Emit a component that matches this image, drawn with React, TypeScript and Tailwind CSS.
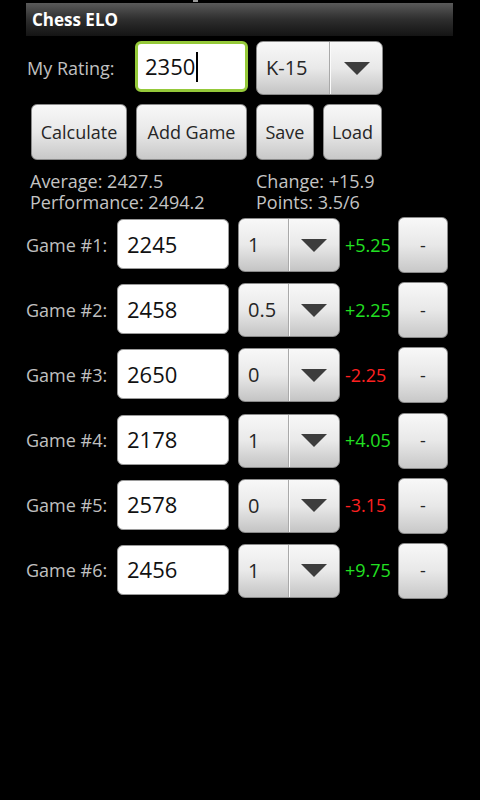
import React from "react";

const games = [
  { n: 1, r: "2245", s: "1", d: "+5.25", pos: true },
  { n: 2, r: "2458", s: "0.5", d: "+2.25", pos: true },
  { n: 3, r: "2650", s: "0", d: "-2.25", pos: false },
  { n: 4, r: "2178", s: "1", d: "+4.05", pos: true },
  { n: 5, r: "2578", s: "0", d: "-3.15", pos: false },
  { n: 6, r: "2456", s: "1", d: "+9.75", pos: true },
];

function Triangle() {
  return (
    <svg width="26" height="13" viewBox="0 0 26 13">
      <polygon points="0,0 26,0 13,13" fill="#3d3d3d" />
    </svg>
  );
}

function Spinner({ value, left, right, h }: { value: string; left: string; right: string; h: string }) {
  return (
    <div
      className={`flex ${h} rounded-[7px] border border-[#8a8a8a] bg-gradient-to-b from-[#f8f8f8] via-[#e9e9e9] to-[#c4c4c4] overflow-hidden`}
    >
      <div className={`${left} flex items-center pl-[9px] text-[20px] text-[#262626]`}>{value}</div>
      <div className="w-px bg-[#a9a9a9]" />
      <div className={`${right} flex items-center justify-center border-l border-[#fbfbfb]`}>
        <Triangle />
      </div>
    </div>
  );
}

function Btn({ label, w }: { label: string; w: string }) {
  return (
    <div
      className={`${w} h-[56px] rounded-[6px] border border-[#8a8a8a] bg-gradient-to-b from-[#f8f8f8] via-[#e8e8e8] to-[#c8c8c8] flex items-center justify-center text-[18px] text-[#262626]`}
    >
      {label}
    </div>
  );
}

export default function App() {
  return (
    <div className="w-[480px] h-[800px] bg-black overflow-hidden [font-family:'Open_Sans','DejaVu_Sans',sans-serif]">
      <div className="h-[3px] flex">
        <div className="ml-[193px] w-[5px] h-[2px] bg-[#9a9a9a]" />
      </div>
      <div className="ml-[26px] w-[427px] h-[33px] bg-gradient-to-b from-[#5a5a5a] via-[#2e2e2e] to-[#141414] flex items-center pl-[6px] text-white font-bold text-[17px] leading-none">
        Chess ELO
      </div>

      <div className="mt-[5px] flex items-center h-[54px]">
        <div className="w-[135px] pl-[27px] text-[18px] text-[#c0c0c0]">My Rating:</div>
        <div className="w-[113px] h-[51px] self-start rounded-[6px] border-[3px] border-[#95c93a] bg-white flex items-center pl-[7px] text-[22px] text-[#111]">
          2350<span className="ml-[1px] inline-block w-[2px] h-[30px] bg-black" />
        </div>
        <div className="ml-[8px] w-[127px]">
          <Spinner value="K-15" left="w-[73px]" right="w-[52px]" h="h-[54px]" />
        </div>
      </div>

      <div className="mt-[9px] flex pl-[31px] gap-[9px]">
        <Btn label="Calculate" w="w-[96px]" />
        <Btn label="Add Game" w="w-[111px]" />
        <Btn label="Save" w="w-[58px]" />
        <Btn label="Load" w="w-[59px]" />
      </div>

      <div className="mt-[11px] flex text-[18px] leading-[21px] text-[#c4c4c4]">
        <div className="w-[256px] pl-[30px]">
          <div>Average: 2427.5</div>
          <div>Performance: 2494.2</div>
        </div>
        <div>
          <div>Change: +15.9</div>
          <div>Points: 3.5/6</div>
        </div>
      </div>

      <div className="mt-[4px] flex flex-col gap-[9.2px]">
        {games.map((g) => (
          <div key={g.n} className="flex items-start h-[56px]">
            <div className="w-[117px] h-[56px] flex items-center pl-[26px] text-[18px] text-[#c0c0c0]">
              Game #{g.n}:
            </div>
            <div className="mt-[2px] w-[112px] h-[50px] rounded-[6px] border border-[#9a9a9a] bg-white flex items-center pl-[9px] text-[22px] text-[#111]">
              {g.r}
            </div>
            <div className="mt-[1px] ml-[9px] w-[102px]">
              <Spinner value={g.s} left="w-[49px]" right="w-[51px]" h="h-[54px]" />
            </div>
            <div
              className={`ml-[5px] w-[53px] h-[56px] flex items-center text-[18px] ${g.pos ? "text-[#22e022]" : "text-[#ff2020]"}`}
            >
              {g.d}
            </div>
            <div className="w-[50px] h-[56px] rounded-[6px] border border-[#8a8a8a] bg-gradient-to-b from-[#f8f8f8] via-[#e8e8e8] to-[#c8c8c8] flex items-center justify-center text-[18px] text-[#262626]">
              -
            </div>
          </div>
        ))}
      </div>
    </div>
  );
}
